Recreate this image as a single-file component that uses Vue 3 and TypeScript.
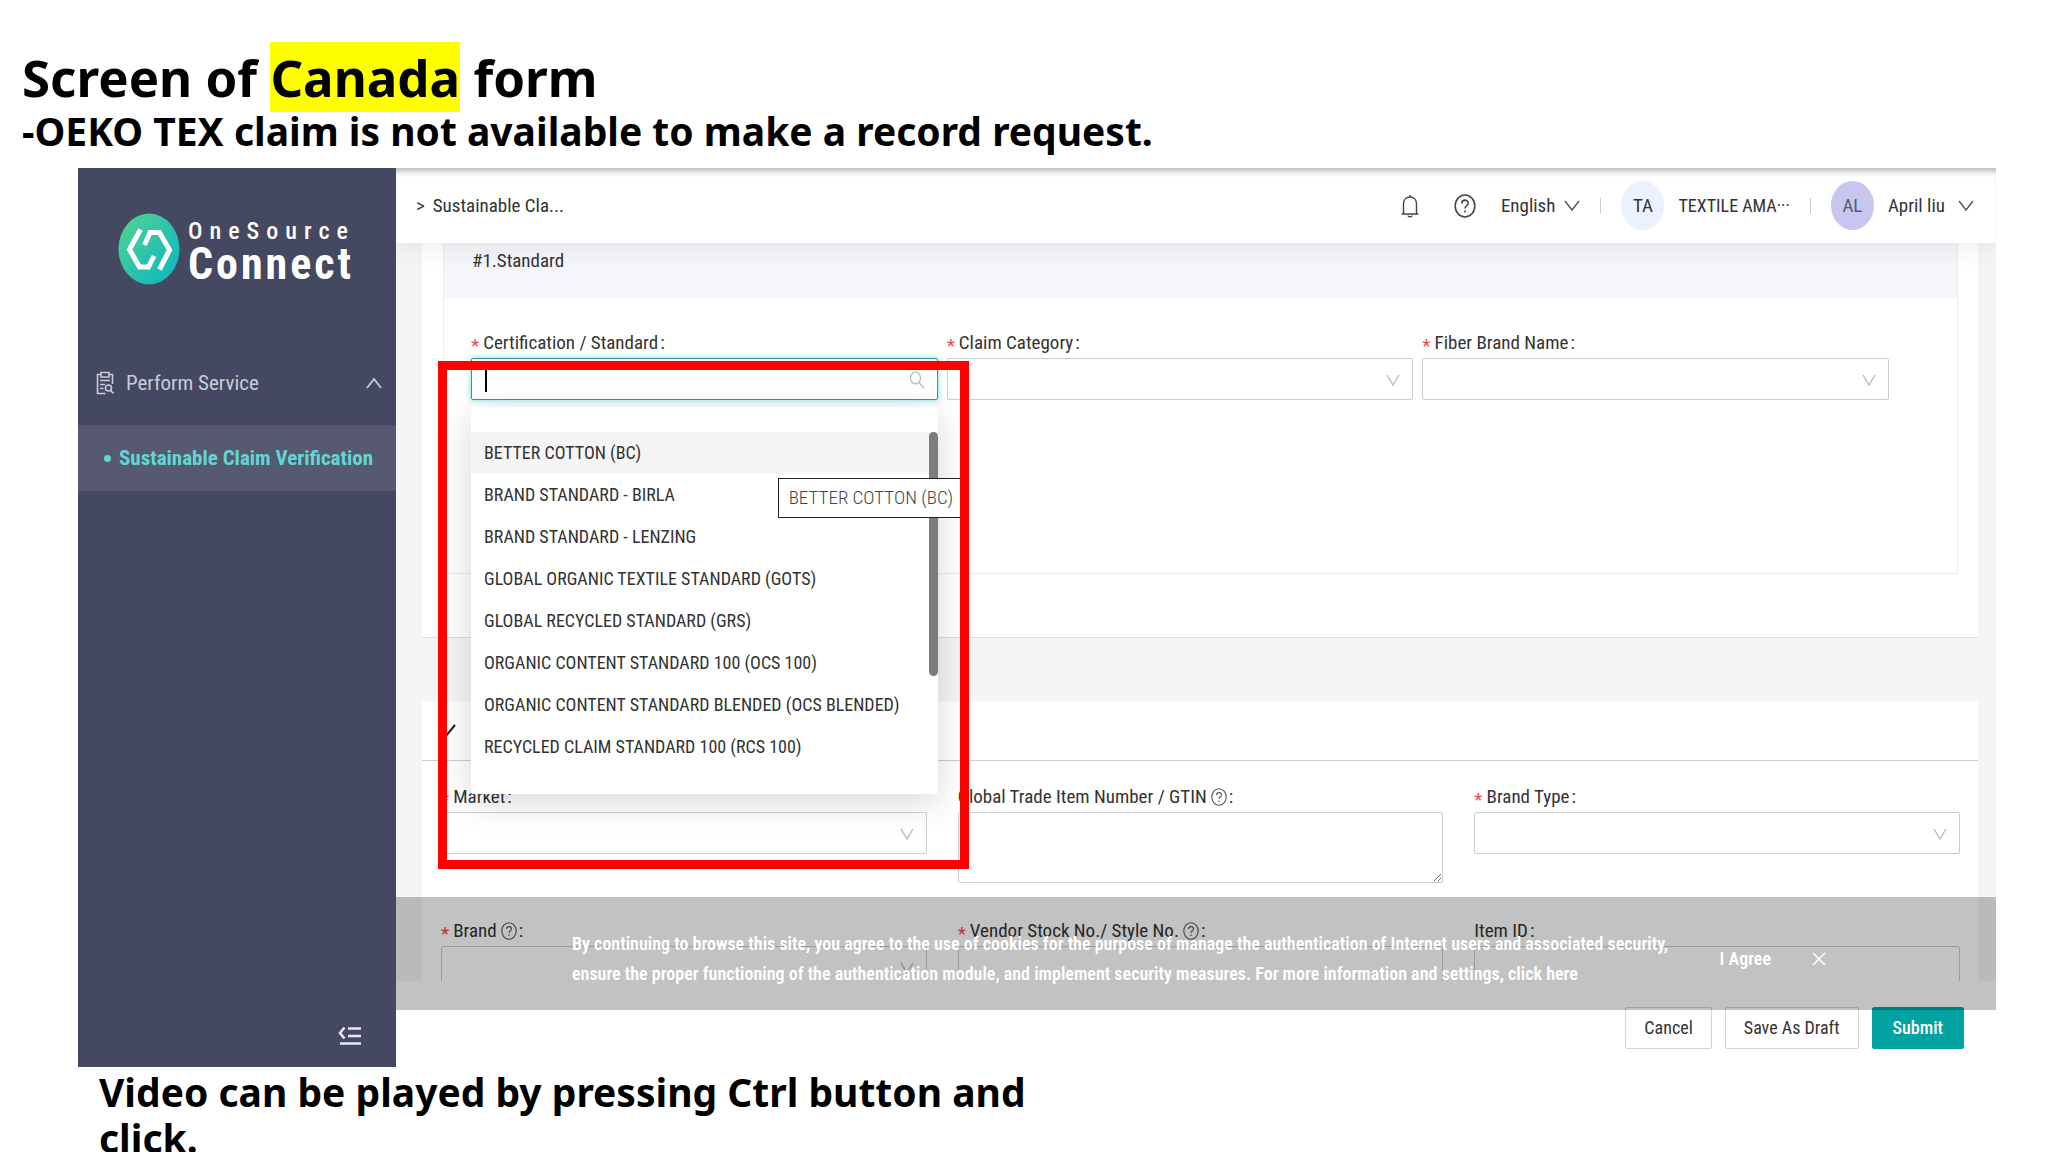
<script setup lang="ts">
import { ref } from 'vue'

const standards: string[] = [
  'BETTER COTTON (BC)',
  'BRAND STANDARD - BIRLA',
  'BRAND STANDARD - LENZING',
  'GLOBAL ORGANIC TEXTILE STANDARD (GOTS)',
  'GLOBAL RECYCLED STANDARD (GRS)',
  'ORGANIC CONTENT STANDARD 100 (OCS 100)',
  'ORGANIC CONTENT STANDARD BLENDED (OCS BLENDED)',
  'RECYCLED CLAIM STANDARD 100 (RCS 100)',
]

interface Field {
  id: string
  label: string
  kind: 'select' | 'textarea' | 'input'
  required?: boolean
  help?: boolean
}

const standardFields: Field[] = [
  { id: 'category', label: 'Claim Category', kind: 'select', required: true },
  { id: 'fiber', label: 'Fiber Brand Name', kind: 'select', required: true },
]

const productFields: Field[] = [
  { id: 'market', label: 'Market', kind: 'select', required: true },
  { id: 'gtin', label: 'Global Trade Item Number / GTIN', kind: 'textarea', help: true },
  { id: 'brand-type', label: 'Brand Type', kind: 'select', required: true },
  { id: 'brand', label: 'Brand', kind: 'select', required: true, help: true },
  { id: 'style', label: 'Vendor Stock No./ Style No.', kind: 'input', required: true, help: true },
  { id: 'item', label: 'Item ID', kind: 'input' },
]

const query = ref('')
const active = ref(0)
</script>

<template>
  <div class="slide">
    <h1 class="title">Screen of <mark>Canada</mark> form</h1>
    <h2 class="subtitle">-OEKO TEX claim is not available to make a record request.</h2>

    <div class="app">
      <aside class="sidebar">
        <div class="logo">
          <svg class="logo-mark" viewBox="0 0 62 72" aria-hidden="true">
            <defs>
              <linearGradient id="mark" x1="0" y1="0" x2="1" y2="1">
                <stop offset="0.1" stop-color="#4fd096" />
                <stop offset="0.9" stop-color="#0fb8bd" />
              </linearGradient>
            </defs>
            <ellipse cx="31" cy="36" rx="30.5" ry="35.5" fill="url(#mark)" />
            <g fill="none" stroke="#fff" stroke-width="5">
              <path d="M22.500 16.500 L11.500 36.500 L21.500 54 H30.500 L36 43" />
              <path d="M26.500 32 L32 19.500 H41.500 L51.500 37 L41.500 56.500" />
            </g>
          </svg>
          <div class="logo-text">
            <span class="logo-top">OneSource</span>
            <span class="logo-bottom">Connect</span>
          </div>
        </div>

        <nav class="nav">
          <button class="nav-group" type="button">
            <svg class="clip" viewBox="0 0 18 24" fill="none" stroke="currentColor" stroke-width="1.600" aria-hidden="true">
              <path d="M5 3.500H1.500V22.500H9.500M13 3.500H16.500V13M5 1.500H13V6H5ZM4 9.500H14M4 13.500H9M4 17.500H7.500M14.500 19.500L17.500 22.500" />
              <circle cx="12.500" cy="17" r="3" />
            </svg>
            <span class="grow">Perform Service</span>
            <svg class="chev" viewBox="0 0 16 12" fill="none" stroke="currentColor" stroke-width="1.800" aria-hidden="true"><path d="M1 11L8 2L15 11" /></svg>
          </button>
          <a class="nav-item" href="#"><i class="dot"></i>Sustainable Claim Verification</a>
        </nav>

        <button class="collapse" type="button" aria-label="Collapse menu">
          <svg viewBox="0 0 24 20" width="24" height="20" fill="none" stroke="#e6e9f5" stroke-width="2.500"><path d="M6.500 1.500L2 7L6.500 12.500M10 2.500H23M10 10H23M2 17.500H23" /></svg>
        </button>
      </aside>

      <main class="main">
        <header class="topbar">
          <div class="crumb grow"><span class="gt">&gt;</span><a href="#">Sustainable Cla...</a></div>
          <button class="plain bell" type="button" aria-label="Notifications">
            <svg viewBox="0 0 20 24" width="20" height="24" fill="none" stroke="#444" stroke-width="1.400"><path d="M10 1V3M1.500 20H18.500M3.500 20V10C3.500 6 6 3 10 3S16.500 6 16.500 10V20M8 21.500C8 23.200 12 23.200 12 21.500" /></svg>
          </button>
          <button class="plain help-btn" type="button" aria-label="Help">
            <svg viewBox="0 0 22 24" width="22" height="24" fill="none" stroke="#444" stroke-width="1.600"><ellipse cx="11" cy="12" rx="9.800" ry="11" /><path d="M7.800 9.500C7.800 5 14.200 5 14.200 9.200C14.200 11.500 11 11.600 11 14.500M11 16.500V18.500" /></svg>
          </button>
          <button class="plain lang" type="button">English
            <svg class="chev" viewBox="0 0 16 12" fill="none" stroke="#555" stroke-width="1.400"><path d="M1 1L8 10L15 1" /></svg>
          </button>
          <i class="bar"></i>
          <span class="avatar company">TA</span>
          <span class="company-name">TEXTILE AMA···</span>
          <i class="bar"></i>
          <span class="avatar person">AL</span>
          <button class="plain user" type="button">April liu
            <svg class="chev" viewBox="0 0 16 12" fill="none" stroke="#555" stroke-width="1.400"><path d="M1 1L8 10L15 1" /></svg>
          </button>
        </header>

        <div class="scroller">
          <section class="card first">
            <div class="panel">
              <div class="panel-head">#1.Standard</div>
              <div class="grid panel-grid">
                <div class="field">
                  <label for="standard"><span class="req">*</span>Certification / Standard<span class="colon">:</span></label>
                  <div class="control">
                    <input id="standard" v-model="query" class="box focused" type="text" role="combobox" aria-expanded="true" aria-controls="standard-list" autocomplete="off" />
                    <i class="caret"></i>
                    <svg class="suffix search" viewBox="0 0 16 18" fill="none" stroke="#bbb" stroke-width="1.300"><ellipse cx="6.500" cy="7" rx="5" ry="5.800" /><path d="M10 11.500L15 17" /></svg>
                  </div>
                  <div class="dropdown">
                    <ul id="standard-list" role="listbox">
                      <li v-for="(s, i) in standards" :key="s" role="option" :aria-selected="i === active" :class="{ active: i === active }" @mouseenter="active = i">{{ s }}</li>
                    </ul>
                    <i class="thumb"></i>
                    <div class="tooltip" role="tooltip">BETTER COTTON (BC)</div>
                  </div>
                  <div class="frame"></div>
                </div>

                <div v-for="f in standardFields" :key="f.id" class="field">
                  <label :for="f.id"><span v-if="f.required" class="req">*</span>{{ f.label }}<span class="colon">:</span></label>
                  <div class="control">
                    <select :id="f.id" class="box"></select>
                    <svg class="suffix" viewBox="0 0 14 12" fill="none" stroke="#bbb" stroke-width="1.400"><path d="M1 1L7 11L13 1" /></svg>
                  </div>
                </div>
              </div>
            </div>
          </section>

          <section class="card second">
            <div class="card-head">
              <svg viewBox="0 0 16 14" width="16" height="14" fill="none" stroke="#222" stroke-width="2"><path d="M1 6L6 12L15 1" /></svg>
            </div>
            <div class="grid product-grid">
              <div v-for="f in productFields" :key="f.id" class="field">
                <label :for="f.id">
                  <span v-if="f.required" class="req">*</span>{{ f.label }}
                  <svg v-if="f.help" class="q" viewBox="0 0 16 18" fill="none" stroke="#555" stroke-width="1.100"><ellipse cx="8" cy="9" rx="7.200" ry="8.200" /><path d="M5.500 7C5.500 3.800 10.500 3.800 10.500 7C10.500 8.800 8 8.800 8 11M8 12.500V14" /></svg>
                  <span class="colon">:</span>
                </label>
                <div class="control">
                  <textarea v-if="f.kind === 'textarea'" :id="f.id" class="box area"></textarea>
                  <input v-else-if="f.kind === 'input'" :id="f.id" class="box" type="text" />
                  <template v-else>
                    <select :id="f.id" class="box"></select>
                    <svg class="suffix" viewBox="0 0 14 12" fill="none" stroke="#bbb" stroke-width="1.400"><path d="M1 1L7 11L13 1" /></svg>
                  </template>
                </div>
              </div>
            </div>
          </section>
        </div>

        <footer class="actions">
          <button class="btn" type="button">Cancel</button>
          <button class="btn" type="button">Save As Draft</button>
          <button class="btn primary" type="button">Submit</button>
        </footer>

        <div class="cookie">
          <p>By continuing to browse this site, you agree to the use of cookies for the purpose of manage the authentication of Internet users and associated security, ensure the proper functioning of the authentication module, and implement security measures. For more information and settings, <a href="#">click here</a></p>
          <button class="agree" type="button">I Agree</button>
          <button class="close" type="button" aria-label="Close">
            <svg viewBox="0 0 14 14" width="14" height="14" fill="none" stroke="#fff" stroke-width="1.500"><path d="M1 1L13 13M13 1L1 13" /></svg>
          </button>
        </div>
      </main>
    </div>

    <p class="caption">Video can be played by pressing Ctrl button and click.</p>
  </div>
</template>

<style>
body {
  margin: 0;
  background: #fff;
}
</style>

<style scoped>
* {
  box-sizing: border-box;
}
.slide {
  height: 100vh;
  overflow: hidden;
  padding: 46px 52px 0 22px;
  color: #000;
  font-family: "Noto Sans", "Open Sans", sans-serif;
}
.title {
  margin: 0;
  font-size: 51px;
  line-height: 62px;
}
.title mark {
  background: #ff0;
  color: inherit;
}
.subtitle,
.caption {
  margin: 0;
  font-size: 39px;
  font-weight: 700;
  line-height: 46px;
}
.caption {
  max-width: 1000px;
  margin: 2px 0 0 77px;
}
.app {
  display: flex;
  margin: 14px 0 0 56px;
  color: #333;
  font-family: "Roboto Condensed", "Noto Sans CJK SC", sans-serif;
  font-size: 19px;
  line-height: 24px;
}
button,
input,
select,
textarea {
  font: inherit;
  color: inherit;
}
button {
  padding: 0;
  border: 0;
  background: none;
}
a {
  color: inherit;
  text-decoration: none;
}
.grow {
  flex: 1;
  text-align: left;
}
.chev {
  width: 16px;
  height: 12px;
}

/* sidebar */
.sidebar {
  display: flex;
  flex: 0 0 318px;
  flex-direction: column;
  background: #454861;
  color: #c9cbd8;
}
.logo {
  display: flex;
  gap: 8px;
  padding: 45px 0 0 40px;
}
.logo-mark {
  width: 62px;
  height: 72px;
}
.logo-text {
  display: flex;
  flex-direction: column;
  color: #fff;
}
.logo-top {
  font-size: 24px;
  font-weight: 500;
  line-height: 36px;
  letter-spacing: 7px;
}
.logo-bottom {
  font-size: 44px;
  font-weight: 700;
  line-height: 30px;
  letter-spacing: 3px;
}
.nav {
  flex: 1;
  padding-top: 56px;
  font-size: 21px;
}
.nav-group {
  display: flex;
  align-items: center;
  gap: 12px;
  width: 100%;
  height: 84px;
  padding: 0 14px 0 18px;
}
.clip {
  width: 18px;
  height: 24px;
}
.nav-item {
  display: flex;
  align-items: center;
  gap: 8px;
  height: 66px;
  padding-left: 26px;
  background: #565970;
  color: #62d6d2;
  font-weight: 700;
}
.dot {
  width: 7px;
  height: 7px;
  border-radius: 50%;
  background: currentColor;
}
.collapse {
  display: flex;
  align-self: flex-end;
  margin: 0 34px 21px 0;
}

/* main column */
.main {
  position: relative;
  display: flex;
  flex: 1;
  flex-direction: column;
  min-width: 0;
  overflow: hidden;
}
.topbar {
  position: relative;
  z-index: 6;
  display: flex;
  align-items: center;
  height: 75px;
  padding: 0 22px 0 20px;
  background: #fff;
  box-shadow: inset 0 7px 6px -4px rgba(0, 0, 0, 0.3), 0 6px 24px rgba(0, 0, 0, 0.07);
}
.crumb {
  display: flex;
  gap: 8px;
}
.plain {
  display: flex;
  align-items: center;
  gap: 9px;
}
.bell {
  margin-right: 34px;
}
.help-btn {
  margin-right: 25px;
}
.bar {
  width: 1px;
  height: 16px;
  margin: 0 20px;
  background: #ccc;
}
.avatar {
  display: flex;
  align-items: center;
  justify-content: center;
  width: 43px;
  height: 49px;
  margin-right: 14px;
  border-radius: 50%;
}
.company {
  background: #ebf1ff;
}
.company-name {
  font-size: 18px;
}
.person {
  background: #c7c6ee;
  color: #555a78;
}
.user {
  gap: 13px;
}

/* form */
.scroller {
  max-height: 738px;
  overflow: hidden;
  background: #f5f5f5;
}
.card {
  margin: 0 18px 0 26px;
  background: #fff;
}
.first {
  padding: 0 20px 63px 21px;
  border-bottom: 1px solid #ddd;
}
.panel {
  border: solid #ebebeb;
  border-width: 0 1px 1px;
}
.panel-head {
  padding: 6px 28px 25px;
  background: #f4f6fa;
}
.grid {
  display: grid;
  grid-template-columns: repeat(3, minmax(0, 1fr));
}
.panel-grid {
  gap: 9px;
  padding: 30px 68px 173px 27px;
}
.field {
  position: relative;
}
label {
  display: flex;
  align-items: center;
  height: 30px;
  white-space: nowrap;
}
.req {
  padding-top: 6px;
  margin-right: 4px;
  color: #f5454f;
}
.colon {
  margin-left: 2px;
}
.q {
  width: 16px;
  height: 18px;
  margin-left: 4px;
}
.control {
  position: relative;
}
.box {
  display: block;
  width: 100%;
  height: 42px;
  margin: 0;
  padding: 0 12px;
  border: 1px solid #ccc;
  border-radius: 2px;
  outline: none;
  background: #fff;
  appearance: none;
}
.area {
  height: 71px;
}
.focused {
  border-color: #2f9a9c;
  box-shadow: 0 0 5px 1px rgba(0, 190, 190, 0.4);
}
.caret {
  position: absolute;
  top: 11px;
  left: 14px;
  width: 2px;
  height: 23px;
  background: #000;
}
.suffix {
  position: absolute;
  top: 16px;
  right: 13px;
  width: 14px;
  height: 12px;
}
.search {
  top: 13px;
  width: 16px;
  height: 18px;
}
.dropdown {
  position: absolute;
  z-index: 3;
  top: 79px;
  left: 0;
  width: 100%;
  padding: 25px 0 26px;
  border-radius: 2px;
  background: #fff;
  box-shadow: 0 8px 36px rgba(0, 0, 0, 0.16);
  font-size: 18px;
}
.dropdown ul {
  margin: 0;
  padding: 0;
  list-style: none;
}
.dropdown li {
  padding: 0 13px;
  line-height: 42px;
  white-space: nowrap;
}
.dropdown .active {
  background: #f5f5f5;
}
.thumb {
  position: absolute;
  top: 25px;
  right: 0;
  width: 9px;
  height: 244px;
  border-radius: 5px;
  background: #7c7c7c;
}
.tooltip {
  position: absolute;
  top: 71px;
  right: -28px;
  width: 188px;
  padding: 0 10px;
  border: 1px solid #222;
  background: #fff;
  color: #444;
  font-size: 19px;
  font-weight: 300;
  line-height: 38px;
}
.frame {
  position: absolute;
  z-index: 4;
  top: 33px;
  left: -33px;
  width: calc(100% + 64px);
  height: 508px;
  border: 9px solid #f00;
  pointer-events: none;
}
.second {
  margin-top: 63px;
}
.card-head {
  display: flex;
  align-items: center;
  height: 60px;
  padding: 0 18px;
  border-bottom: 1px solid #ccc;
}
.product-grid {
  gap: 33px 31px;
  padding: 21px 18px 24px 19px;
}

/* footer and cookie bar */
.actions {
  display: flex;
  justify-content: flex-end;
  gap: 13px;
  height: 86px;
  padding: 26px 32px 0 0;
}
.btn {
  height: 42px;
  padding: 0 18px;
  border: 1px solid #d4d4d4;
  border-radius: 2px;
  background: #fff;
  font-size: 18px;
}
.primary {
  padding: 0 20px;
  border-color: #00a3a1;
  background: #00a3a1;
  color: #fff;
  font-weight: 500;
}
.cookie {
  position: absolute;
  z-index: 5;
  right: 0;
  bottom: 57px;
  left: 0;
  display: flex;
  align-items: center;
  height: 113px;
  padding: 11px 170px 0 176px;
  background: rgba(0, 0, 0, 0.24);
  color: #fff;
  font-size: 18px;
  font-weight: 600;
}
.cookie p {
  flex: 1;
  margin: 0;
  line-height: 30px;
}
.agree {
  margin-right: 41px;
}
.close {
  display: flex;
}
</style>
